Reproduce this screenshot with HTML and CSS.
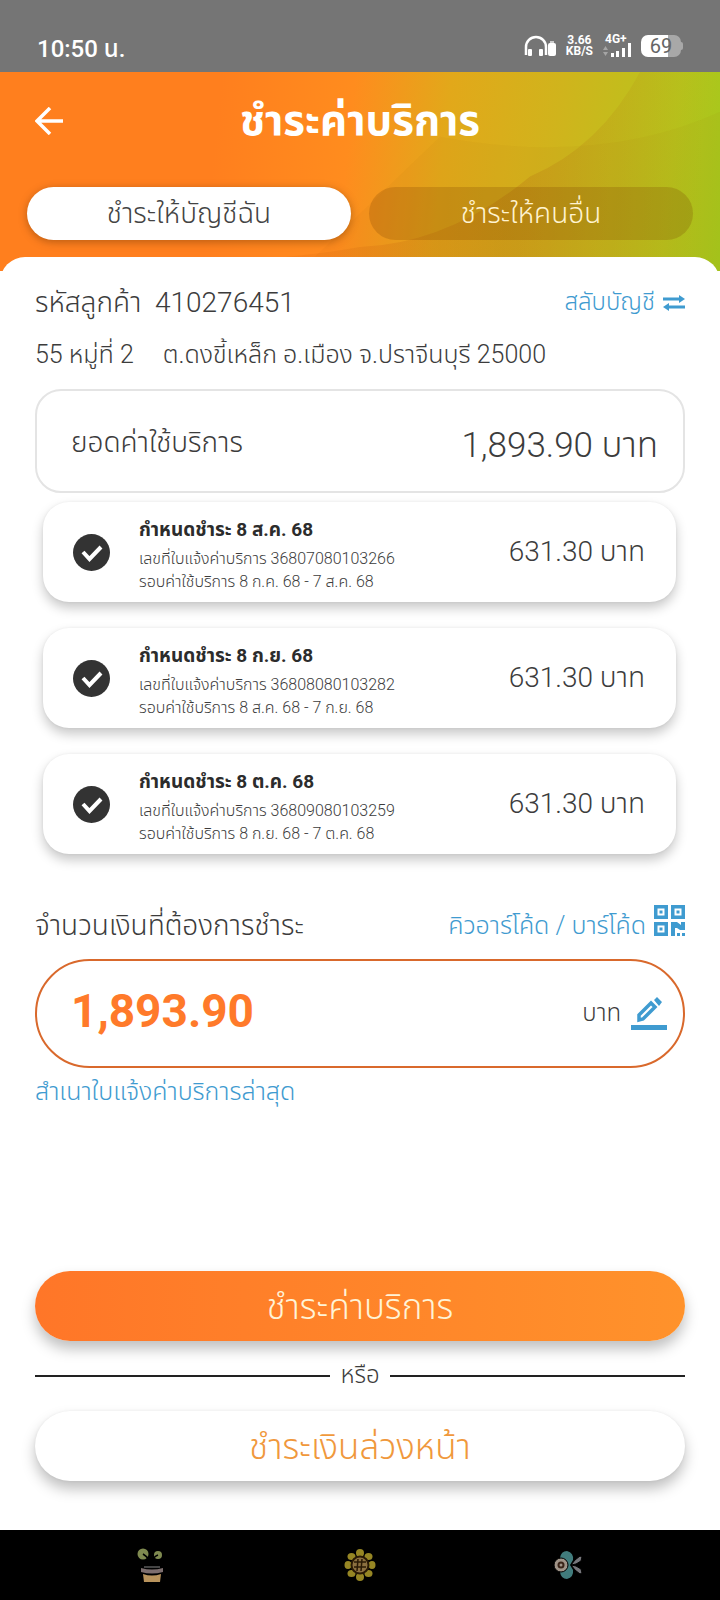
FILE: index.html
```html
<!DOCTYPE html>
<html lang="th">
<head>
<meta charset="utf-8">
<meta name="viewport" content="width=device-width, initial-scale=1">
<title>ชำระค่าบริการ</title>
<link rel="stylesheet" href="styles.css">
</head>
<body>
<div class="screen">
  <div class="status">
    <span class="clock">10:50 น.</span>
    <div class="status-icons">
      <svg width="32" height="22" viewBox="0 0 32 22"><path d="M2 20V12a10 10 0 0 1 20 0v8" fill="none" stroke="#fff" stroke-width="2.500"/><rect x="4" y="14" width="4" height="7" rx="1" fill="#fff"/><rect x="15" y="14" width="4" height="7" rx="1" fill="#fff"/><rect x="24" y="8" width="8" height="13" rx="2" fill="#fff"/><rect x="26" y="6" width="4" height="2" fill="#ccc"/></svg>
      <span class="speed">3.66<br>KB/S</span>
      <span class="network"><span>4G+</span>
      <svg width="28" height="14" viewBox="0 0 28 14"><path d="M0 7l2.500-4L5 7zM0 9h5L2.500 13z" fill="#a5a5a5"/><path d="M8 10h3v4H8zM13 8h3v6h-3zM19 5h3v9h-3zM25 0h3v14h-3z" fill="#fff"/></svg></span>
      <span class="battery">69</span>
    </div>
  </div>
  <header class="hero">
    <svg class="waves" viewBox="0 0 720 200" preserveAspectRatio="none">
      <defs><linearGradient id="fade" x1="0" x2="1" y1="0" y2="0"><stop offset="0" stop-color="#c05a10" stop-opacity="0"/><stop offset=".4" stop-color="#e06a10" stop-opacity=".2"/><stop offset=".7" stop-color="#b05a10" stop-opacity=".22"/><stop offset="1" stop-color="#a05a10" stop-opacity="0"/></linearGradient></defs>
      <path d="M640 0Q600 75 530 105Q450 172 360 176Q250 196 0 196V200H720V0z" fill="url(#fade)"/><path d="M440 65Q600 95 720 40V200H300z" fill="#a06010" opacity=".05"/></svg>
    <div class="titlebar">
      <button class="back" aria-label="ย้อนกลับ"><svg width="28" height="28" viewBox="0 0 28 28"><path d="M28 14H3M15 1L2 14l13 13" fill="none" stroke="#fff" stroke-width="3.500"/></svg></button>
      <h1>ชำระค่าบริการ</h1>
    </div>
    <div class="tabs">
      <button class="tab active">ชำระให้บัญชีฉัน</button>
      <button class="tab">ชำระให้คนอื่น</button>
    </div>
  </header>
  <main class="sheet">
    <div class="row customer">
      <span>รหัสลูกค้า&nbsp; 410276451</span>
      <a class="link swap" href="#">สลับบัญชี <svg width="22" height="16" viewBox="0 0 22 16"><path d="M0 2.500h16V0l6 4-6 4V5.500H0zM22 10.500H6V8l-6 4 6 4v-2.500h16z" fill="#3f9bd0"/></svg></a>
    </div>
    <p class="address"><span>55 หมู่ที่ 2</span><span>ต.ดงขี้เหล็ก อ.เมือง จ.ปราจีนบุรี 25000</span></p>
    <section class="total"><span>ยอดค่าใช้บริการ</span><span class="total-value">1,893.90 บาท</span></section>
    <ul class="bills">
      <li class="bill">
        <svg class="check" viewBox="0 0 37 37"><circle cx="18.500" cy="18.500" r="18.500" fill="#333"/><path d="M10 18l6.500 7L28 13" fill="none" stroke="#fff" stroke-width="4"/></svg>
        <div class="bill-info"><h2>กำหนดชำระ 8 ส.ค. 68</h2><p>เลขที่ใบแจ้งค่าบริการ 36807080103266</p><p>รอบค่าใช้บริการ 8 ก.ค. 68 - 7 ส.ค. 68</p></div>
        <span class="bill-value">631.30 บาท</span>
      </li>
      <li class="bill">
        <svg class="check" viewBox="0 0 37 37"><circle cx="18.500" cy="18.500" r="18.500" fill="#333"/><path d="M10 18l6.500 7L28 13" fill="none" stroke="#fff" stroke-width="4"/></svg>
        <div class="bill-info"><h2>กำหนดชำระ 8 ก.ย. 68</h2><p>เลขที่ใบแจ้งค่าบริการ 36808080103282</p><p>รอบค่าใช้บริการ 8 ส.ค. 68 - 7 ก.ย. 68</p></div>
        <span class="bill-value">631.30 บาท</span>
      </li>
      <li class="bill">
        <svg class="check" viewBox="0 0 37 37"><circle cx="18.500" cy="18.500" r="18.500" fill="#333"/><path d="M10 18l6.500 7L28 13" fill="none" stroke="#fff" stroke-width="4"/></svg>
        <div class="bill-info"><h2>กำหนดชำระ 8 ต.ค. 68</h2><p>เลขที่ใบแจ้งค่าบริการ 36809080103259</p><p>รอบค่าใช้บริการ 8 ก.ย. 68 - 7 ต.ค. 68</p></div>
        <span class="bill-value">631.30 บาท</span>
      </li>
    </ul>
    <div class="row pay-head">
      <label for="amount">จำนวนเงินที่ต้องการชำระ</label>
      <a class="link qr" href="#">คิวอาร์โค้ด / บาร์โค้ด <svg width="31" height="31" viewBox="0 0 31 31"><g fill="none" stroke="#3f9bd0" stroke-width="3.500"><path d="M1.750 1.750h10.500v10.500h-10.500zM18.750 1.750h10.500v10.500h-10.500zM1.750 18.750h10.500v10.500h-10.500z"/></g><path d="M5.500 5.500h3v3h-3zM22.500 5.500h3v3h-3zM5.500 22.500h3v3h-3zM17 17h6l4 3v-3h4v8h-5l-3-2h-2v8h-4zM23 28h3v3h-3zM28 28h3v3h-3z" fill="#3f9bd0"/></svg></a>
    </div>
    <div class="amount">
      <input id="amount" type="text" value="1,893.90">
      <span>บาท</span>
      <button class="edit" aria-label="แก้ไข"><svg width="36" height="34" viewBox="0 0 36 34"><path d="M8 18L20 6l4 4-12 12-4 1z" fill="none" stroke="#3f9bd0" stroke-width="3.500"/><path d="M23 3l3-3 5 5-3 4zM0 28h36v5H0z" fill="#3f9bd0"/></svg></button>
    </div>
    <a class="link copy" href="#">สำเนาใบแจ้งค่าบริการล่าสุด</a>
    <div class="actions">
      <button class="pill primary">ชำระค่าบริการ</button>
      <div class="or">หรือ</div>
      <button class="pill secondary">ชำระเงินล่วงหน้า</button>
    </div>
  </main>
  <nav class="navbar">
    <button aria-label="แอปล่าสุด"><svg width="36" height="36" viewBox="0 0 36 36"><circle cx="10" cy="7" r="5.500" fill="#7f8a50"/><circle cx="25" cy="8" r="4" fill="#7f8a50"/><path d="M18 20Q18 12 10 7M19 15q1-5 6-7" stroke="#000" stroke-width="1.500" fill="none"/><path d="M11 19h16v2H11z" fill="#444"/><path d="M8 21q11 3 22 0v4q-11 3-22 0z" fill="#7d6e6e"/><path d="M10 27q9 3 18 0l-1 8H11z" fill="#b8935c"/></svg></button>
    <button aria-label="หน้าหลัก"><svg width="36" height="36" viewBox="0 0 36 36"><g fill="#968624"><ellipse cx="18" cy="6" rx="4" ry="4"/><ellipse cx="26.500" cy="9.500" rx="4" ry="3.500"/><ellipse cx="30" cy="18" rx="3.500" ry="4"/><ellipse cx="26.500" cy="26.500" rx="4" ry="3.500"/><ellipse cx="18" cy="30" rx="4" ry="4"/><ellipse cx="9.500" cy="26.500" rx="4" ry="3.500"/><ellipse cx="6" cy="18" rx="3.500" ry="4"/><ellipse cx="9.500" cy="9.500" rx="4" ry="3.500"/></g><circle cx="18" cy="18" r="8.500" fill="#8c7040" stroke="#2a1a05" stroke-width="2"/><path d="M12 15h12M12 20h12M16 12l-1 12M20 12l-1 12" stroke="#2a1a05" stroke-width="1.500"/></svg></button>
    <button aria-label="ย้อนกลับ"><svg width="36" height="36" viewBox="0 0 36 36"><path d="M9 11Q10 4 16 4q7 2 6 9l-3 5 3 5q1 7-6 9-6 0-7-7z" fill="#417c7c"/><path d="M20 18l4-5 5-4 2 1-1 4-5 3zM20 18l5 1 5 3 1 4-2 1-5-4z" fill="#77777c" stroke="#000"/><circle cx="10" cy="18" r="7" fill="#a09488" stroke="#000"/><circle cx="10" cy="18" r="3.500" fill="#3a2418"/><circle cx="10" cy="18" r="1.500" fill="#a09488"/></svg></button>
  </nav>
</div>
</body>
</html>
```
FILE: styles.css
```css
* { box-sizing: border-box; }
body {
  margin: 0;
  background: #fff;
  color: #3c3c3c;
  font-family: Roboto, "Noto Sans Thai", "Noto Sans", sans-serif;
  font-weight: 300;
}
button, input { font: inherit; color: inherit; border: 0; background: none; padding: 0; margin: 0; }
h1, h2, p, ul { margin: 0; padding: 0; }
svg { display: block; flex: none; }
.screen { min-height: 100vh; display: flex; flex-direction: column; }
.status {
  height: 72px;
  padding: 20px 39px 0 37px;
  display: flex;
  justify-content: space-between;
  align-items: center;
  background: #757575;
  color: #fff;
  font-weight: 500;
}
.clock { padding-top: 8px; font-size: 24px; }
.status-icons { display: flex; align-items: center; gap: 10px; }
.speed { font-size: 12px; line-height: 11px; font-weight: 700; text-align: center; }
.network { display: flex; flex-direction: column; font-size: 12px; line-height: 8px; font-weight: 700; }
.network span { padding-left: 2px; }
.battery {
  position: relative;
  width: 40px;
  height: 22px;
  border-radius: 7px;
  background: linear-gradient(90deg, #fff 68%, #a8a8a8 68%);
  color: #666;
  font-size: 20px;
  font-weight: 400;
  line-height: 23px;
  text-align: center;
}
.battery::after { content: ""; position: absolute; left: 100%; top: 7px; width: 2px; height: 8px; border-radius: 0 2px 2px 0; background: #a8a8a8; }
.hero {
  position: relative;
  padding: 0 27px 31px;
  background: linear-gradient(96deg, #ff7f1e 0%, #ff7f1e 30%, #ff8c1e 48%, #e2a81a 61%, #d0b41c 76%, #b8c41c 92%, #a4c81c 100%);
}
.waves { position: absolute; inset: 0; width: 100%; height: 100%; }
.titlebar { position: relative; display: grid; grid-template-columns: 36px 1fr 36px; align-items: center; height: 115px; padding-bottom: 18px; }
.back { padding-left: 8px; }
h1 { color: #fff; text-align: center; font-size: 42px; line-height: 60px; font-weight: 700; }
.tabs { position: relative; display: grid; grid-template-columns: 1fr 1fr; gap: 18px; }
.tab { height: 53px; padding-top: 2px; border-radius: 27px; font-size: 28px; color: #fff3d0; background: rgba(120, 60, 0, .22); }
.tab.active { background: #fff; color: #444; box-shadow: 0 2px 8px rgba(80, 40, 0, .4); }
.sheet {
  position: relative;
  flex: 1;
  display: flex;
  flex-direction: column;
  margin-top: -14px;
  padding: 23px 35px 49px;
  border-radius: 25px 25px 0 0;
  background: #fff;
}
.row { display: flex; justify-content: space-between; align-items: center; }
.customer { height: 46px; font-size: 28px; }
.link { display: flex; align-items: center; gap: 8px; color: #3f9bd0; text-decoration: none; font-size: 25px; }
.swap { font-size: 24px; }
.address { display: flex; gap: 29px; padding-top: 13px; font-size: 25px; line-height: 32px; height: 63px; }
.total {
  height: 104px;
  padding: 4px 25px 0 34px;
  display: flex;
  justify-content: space-between;
  align-items: center;
  border: 2px solid #e4e4e4;
  border-radius: 26px;
  font-size: 28px;
}
.total-value { padding-top: 6px; font-size: 35px; }
.bills { list-style: none; display: grid; gap: 26px; padding: 9px 9px 0 8px; }
.bill {
  height: 100px;
  display: flex;
  align-items: center;
  padding: 1px 31px 0 30px;
  border-radius: 26px;
  background: #fff;
  box-shadow: 0 6px 12px rgba(0, 0, 0, .22), 0 0 3px rgba(0, 0, 0, .06);
}
.check { width: 37px; height: 37px; }
.bill-info { flex: 1; padding-left: 29px; font-size: 16px; line-height: 23px; }
h2 { color: #2c2c2c; font-size: 19px; line-height: 34px; font-weight: 700; }
.bill-value { font-size: 28px; }
.pay-head { margin-top: 50px; height: 44px; font-size: 28px; }
.qr svg { margin-bottom: 12px; }
.amount {
  display: flex;
  align-items: center;
  height: 109px;
  margin-top: 11px;
  padding: 0 16px 0 34px;
  border: 2px solid #d9692c;
  border-radius: 55px;
  font-size: 24px;
}
.amount input { flex: 1; min-width: 0; padding-bottom: 6px; color: #ff7a2a; font-size: 46px; font-weight: 700; }
.edit { margin-left: 10px; }
.copy { height: 48px; }
.actions { margin-top: auto; display: flex; flex-direction: column; }
.pill { height: 70px; padding-top: 4px; border-radius: 35px; font-size: 35px; box-shadow: 0 8px 14px rgba(0, 0, 0, .25); }
.primary { background: linear-gradient(90deg, #ff7628, #ff922b); color: #fff3d6; }
.secondary { background: #fff; color: #f0983c; box-shadow: 0 8px 14px rgba(0, 0, 0, .25), 0 0 3px rgba(0, 0, 0, .06); }
.or { height: 70px; display: flex; align-items: center; gap: 10px; font-size: 24px; }
.or::before, .or::after { content: ""; flex: 1; height: 2px; background: #222; }
.navbar { height: 70px; padding: 0 133px; display: flex; align-items: center; justify-content: space-between; background: #000; }
```
